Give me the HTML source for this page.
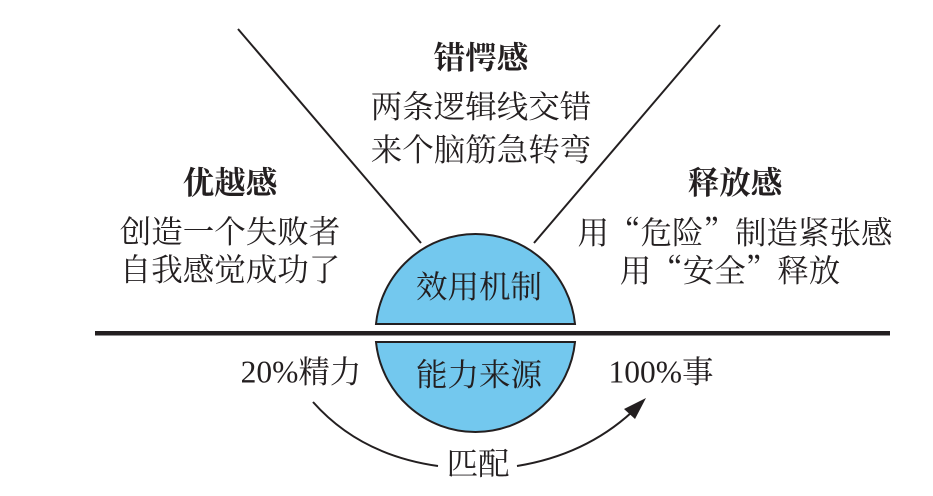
<!DOCTYPE html>
<html><head><meta charset="utf-8"><style>
html,body{margin:0;padding:0;background:#fff;}
body{width:933px;height:496px;position:relative;overflow:hidden;font-family:"Liberation Serif","Noto Serif CJK SC",serif;color:#231f20;}
.t{position:absolute;white-space:nowrap;font-size:31.5px;line-height:1;transform:translate(-50%,-50%);}
.b{font-weight:bold;}
.q{font-family:"Noto Serif CJK SC",serif;}
</style></head><body>
<svg width="933" height="496" style="position:absolute;left:0;top:0">
<line x1="238" y1="29" x2="421" y2="243" stroke="#231f20" stroke-width="2"/>
<line x1="720" y1="25" x2="534" y2="243" stroke="#231f20" stroke-width="2"/>
<path d="M376,324 A100,100 0 0 1 575,324 Z" fill="#73c8ee" stroke="#231f20" stroke-width="2"/>
<path d="M376,342 A100,100 0 0 0 575,342 Z" fill="#73c8ee" stroke="#231f20" stroke-width="2"/>
<rect x="95" y="331" width="795" height="4.5" fill="#231f20"/>
<path d="M313,402 Q360,455 438,466" fill="none" stroke="#231f20" stroke-width="2"/>
<path d="M517,466 Q585,455 632,412" fill="none" stroke="#231f20" stroke-width="2"/>
<polygon points="646,398 624,409 635,419" fill="#231f20"/>
</svg>
<div class="t b" style="left:481px;top:58px">错愕感</div>
<div class="t" style="left:481px;top:107px">两条逻辑线交错</div>
<div class="t" style="left:481px;top:150px">来个脑筋急转弯</div>
<div class="t b" style="left:230px;top:183px">优越感</div>
<div class="t" style="left:230px;top:232px">创造一个失败者</div>
<div class="t" style="left:230px;top:270px">自我感觉成功了</div>
<div class="t b" style="left:735px;top:183px">释放感</div>
<div class="t" style="left:735px;top:232px">用<span class="q">“</span>危险<span class="q">”</span>制造紧张感</div>
<div class="t" style="left:730px;top:270px">用<span class="q">“</span>安全<span class="q">”</span>释放</div>
<div class="t" style="left:479px;top:287px">效用机制</div>
<div class="t" style="left:479px;top:375px">能力来源</div>
<div class="t" style="left:301px;top:372px">20%精力</div>
<div class="t" style="left:661px;top:372px">100%事</div>
<div class="t" style="left:478px;top:464px">匹配</div>
</body></html>
